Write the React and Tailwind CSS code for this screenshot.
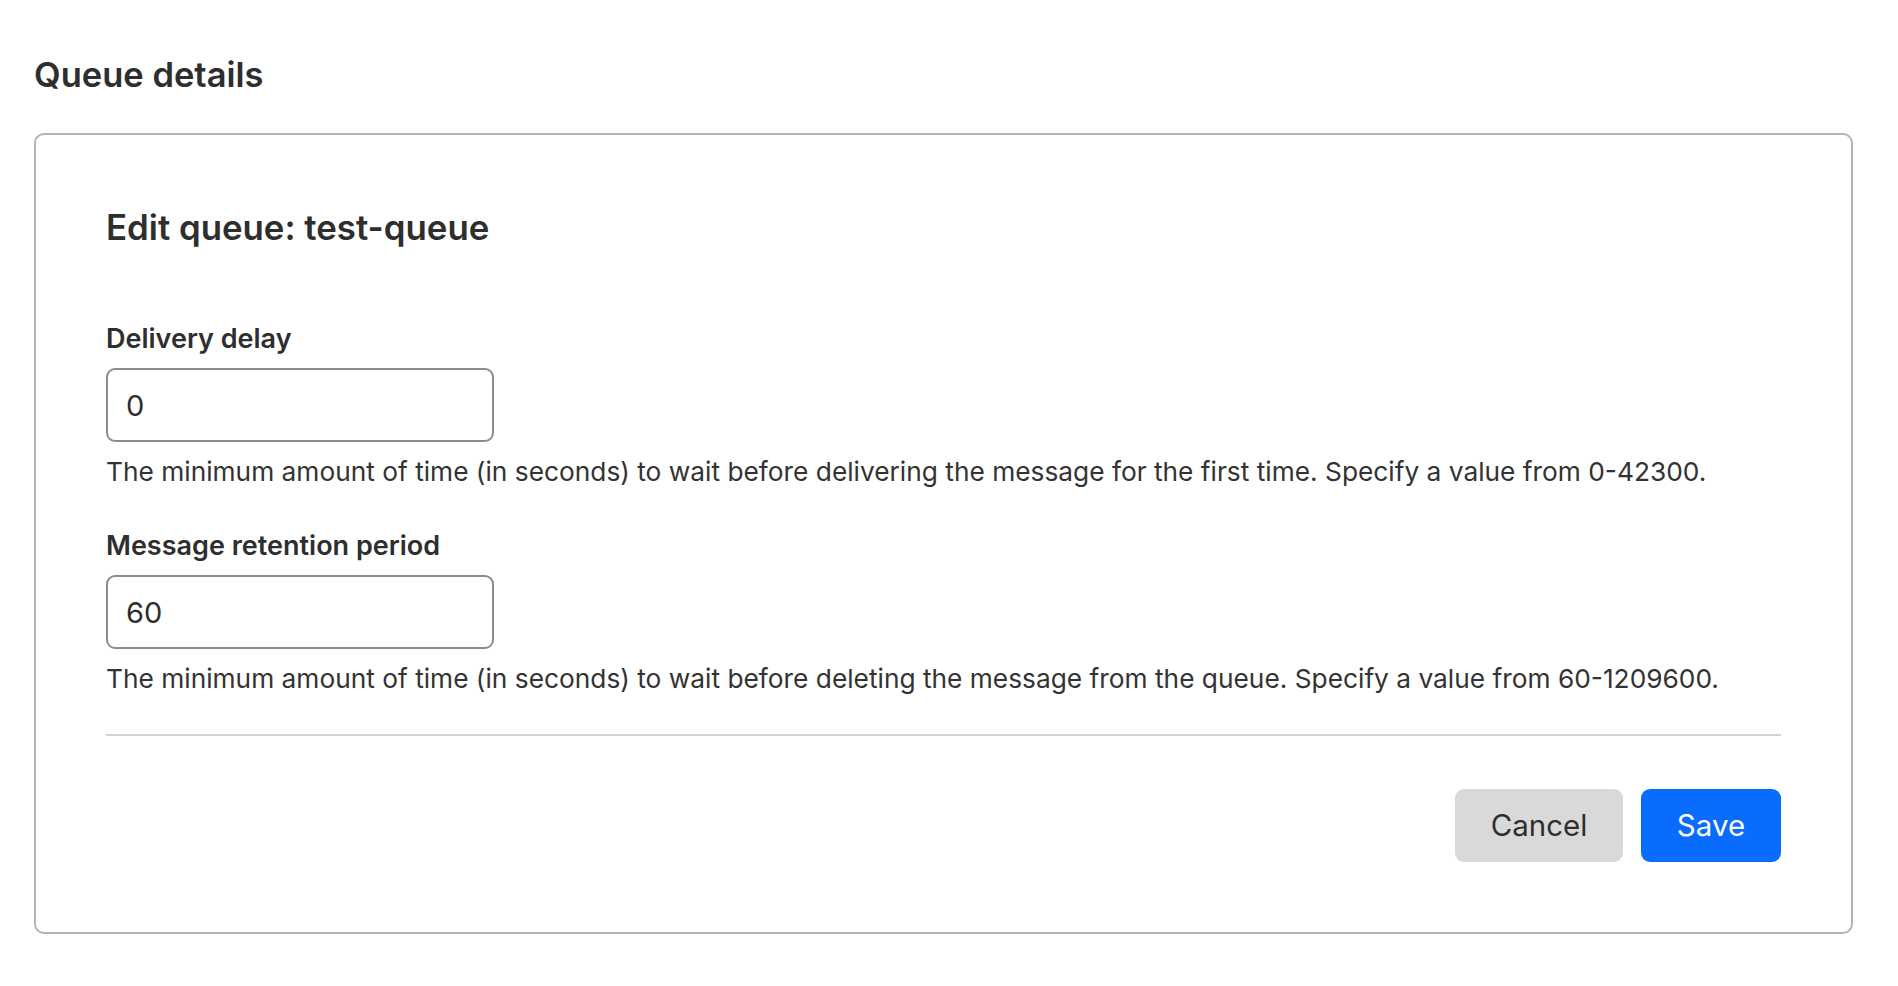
import React, { useState } from 'react';

const FONT = { fontFamily: 'Inter, "Noto Sans", "Liberation Sans", sans-serif' };

function Field({ label, value, onChange, help, className = '' }) {
  return (
    <div className={className}>
      <label className="block text-[27px] leading-[30px] font-semibold text-[#2e2e2e]">{label}</label>
      <input
        type="text"
        value={value}
        onChange={e => onChange(e.target.value)}
        className="mt-[14px] block w-[388px] h-[74px] rounded-[9px] border-2 border-[#8c8c8c] bg-white px-[18px] text-[29px] text-[#2e2e2e] focus:outline-none"
      />
      <p className="mt-[15px] text-[26.3px] leading-[30px] text-[#333333]">{help}</p>
    </div>
  );
}

export default function App() {
  const [delay, setDelay] = useState('0');
  const [retention, setRetention] = useState('60');

  return (
    <div className="min-h-screen bg-white px-[34px] pt-[55px]" style={FONT}>
      <h1 className="text-[34.5px] leading-[40px] font-semibold text-[#2e2e2e]">Queue details</h1>

      <div className="mt-[38px] w-[1819px] rounded-[10px] border-2 border-[#b3b3b3] px-[70px] pt-[72px] pb-[70px]">
        <h2 className="text-[34.8px] leading-[40px] font-semibold text-[#2e2e2e]">Edit queue: test-queue</h2>

        <Field
          className="mt-[77px]"
          label="Delivery delay"
          value={delay}
          onChange={setDelay}
          help="The minimum amount of time (in seconds) to wait before delivering the message for the first time. Specify a value from 0-42300."
        />
        <Field
          className="mt-[44px]"
          label="Message retention period"
          value={retention}
          onChange={setRetention}
          help="The minimum amount of time (in seconds) to wait before deleting the message from the queue. Specify a value from 60-1209600."
        />

        <div className="mt-[40px] h-[2px] bg-[#d4d4d4]" />

        <div className="mt-[53px] flex justify-end gap-[18px]">
          <button className="h-[73px] w-[168px] rounded-[9px] bg-[#d9d9d9] text-[29.5px] text-[#2e2e2e]">Cancel</button>
          <button className="h-[73px] w-[140px] rounded-[9px] bg-[#0a6cff] text-[29.5px] text-white">Save</button>
        </div>
      </div>
    </div>
  );
}
